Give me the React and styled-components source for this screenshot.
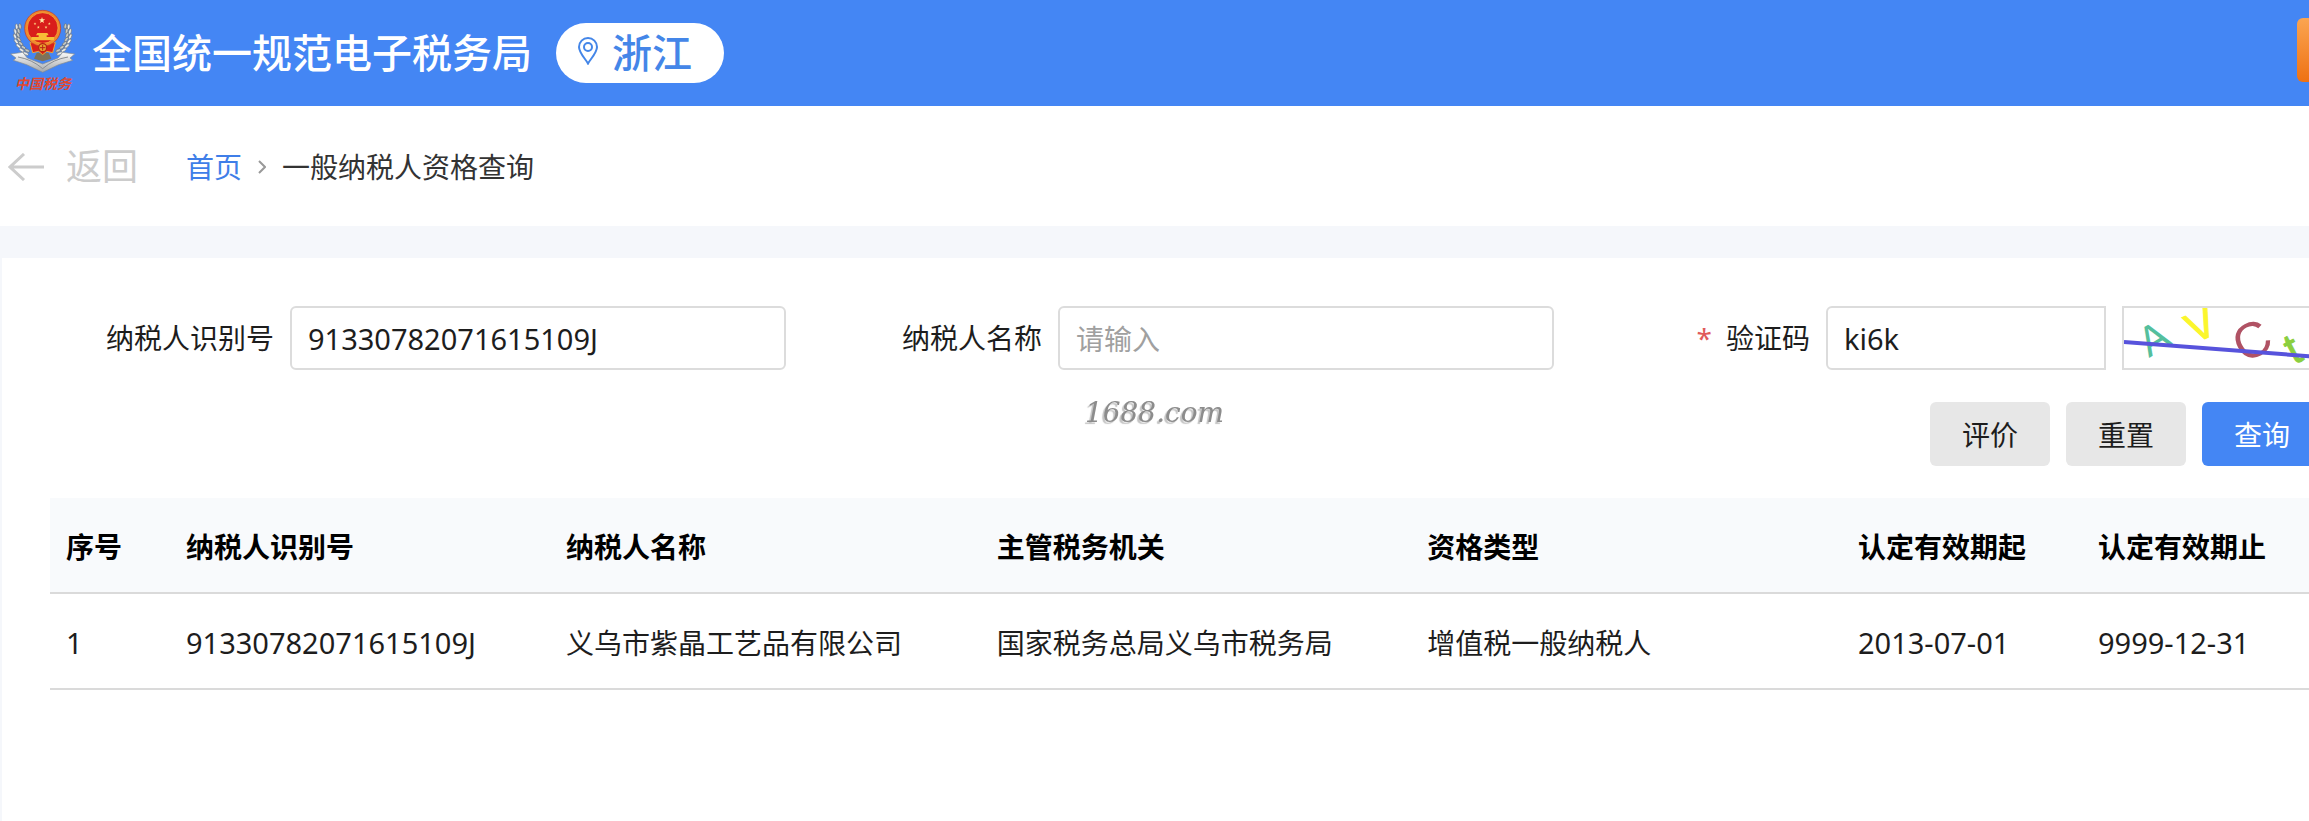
import React from "react";
import styled, { createGlobalStyle } from "styled-components";

const GlobalStyle = createGlobalStyle`
  *, *::before, *::after { box-sizing: border-box; }
  body {
    margin: 0;
    overflow-x: hidden;
    background: #f5f7fb;
    color: #1d1d1d;
    font-family: "Noto Sans", "Noto Sans CJK SC", sans-serif;
    font-size: 28px;
    line-height: 40px;
  }
  button, input { font: inherit; color: inherit; }
`;

const Viewport = styled.div`
  overflow: hidden;
`;

const Page = styled.div`
  display: flex;
  flex-direction: column;
  min-width: 2370px;
  min-height: 100vh;
`;

const Header = styled.header`
  display: flex;
  align-items: center;
  height: 106px;
  padding: 0 0 0 10px;
  background: #4486f4;
`;

const Brand = styled.div`
  display: flex;
  flex-direction: column;
  align-items: center;
  width: 66px;
  margin: 0 16px 6px 0;
`;

const BrandName = styled.span`
  color: #e2482f;
  font-family: "Noto Sans CJK SC", sans-serif;
  font-size: 14px;
  font-style: italic;
  font-weight: 700;
  line-height: 20px;
`;

const Title = styled.h1`
  margin: 0 24px 4px 0;
  color: #fff;
  font-family: "Noto Sans CJK SC", sans-serif;
  font-size: 40px;
  font-weight: 500;
  line-height: 60px;
`;

const Region = styled.button`
  display: flex;
  align-items: center;
  gap: 14px;
  height: 60px;
  padding: 0 32px 4px 22px;
  border: 0;
  border-radius: 30px;
  background: #fff;
  color: #4486e8;
  font-family: "Noto Sans CJK SC", sans-serif;
  font-size: 40px;
  font-weight: 500;
  line-height: 56px;
`;

const HeaderAction = styled.button`
  width: 73px;
  height: 64px;
  margin: 0 0 6px auto;
  border: 0;
  border-radius: 6px;
  background: linear-gradient(#fba551, #ee7113);
`;

const Crumbs = styled.nav`
  display: flex;
  align-items: center;
  height: 120px;
  padding: 2px 0 0 8px;
  background: #fff;
`;

const Back = styled.button`
  display: flex;
  align-items: center;
  gap: 22px;
  margin-right: 48px;
  padding: 0;
  border: 0;
  background: none;
  color: #ccc;
  font-size: 36px;
`;

const HomeLink = styled.a`
  color: #3f7ee8;
  text-decoration: none;
`;

const Separator = styled.svg`
  margin: 0 16px;
`;

const Current = styled.span`
  color: #333;
`;

const Panel = styled.main`
  display: flex;
  flex: 1;
  flex-direction: column;
  gap: 32px;
  margin: 32px 0 0 2px;
  padding: 48px;
  background: #fff;
`;

const Form = styled.form`
  display: grid;
  grid-template-columns: repeat(3, minmax(0, 1fr));
  gap: 32px;
`;

const Field = styled.div`
  display: flex;
  align-items: center;
  gap: 16px;
`;

const Label = styled.label`
  width: 224px;
  flex: none;
  text-align: right;
`;

const Required = styled.span`
  margin-right: 14px;
  color: #e05a5a;
`;

const Input = styled.input`
  flex: 1;
  min-width: 0;
  height: 64px;
  padding: 0 16px;
  border: 2px solid #dcdcdc;
  border-radius: ${(p) => (p.$joined ? "6px 0 0 6px" : "6px")};
  background: #fff;
  font-size: 29px;
  outline: 0;
  &::placeholder { color: #a0a0a0; font-size: 28px; opacity: 1; }
`;

const Captcha = styled.button`
  flex: none;
  width: 200px;
  height: 64px;
  padding: 0;
  border: 2px solid #dcdcdc;
  background: #fff;
  overflow: hidden;
  svg { display: block; }
`;

const Actions = styled.div`
  display: flex;
  grid-column: 1 / -1;
  justify-content: flex-end;
  gap: 16px;
`;

const Button = styled.button`
  width: 120px;
  height: 64px;
  padding: 2px 0 0;
  border: 0;
  border-radius: 6px;
  background: ${(p) => (p.$primary ? "#4486f4" : "#e7e7e7")};
  color: ${(p) => (p.$primary ? "#fff" : "#1d1d1d")};
`;

const Table = styled.table`
  width: 100%;
  table-layout: fixed;
  border-collapse: separate;
  border-spacing: 0;
`;

const Col = styled.col`
  width: ${(p) => p.$width};
`;

const Th = styled.th`
  height: 96px;
  padding: 4px 16px 0;
  border-bottom: 2px solid #dadada;
  background: #f8fafc;
  color: #000;
  font-weight: 700;
  text-align: left;
`;

const Td = styled.td`
  height: 96px;
  padding: 4px 16px 0;
  border-bottom: 2px solid #dadada;
  font-size: ${(p) => (p.$numeric ? "29px" : "28px")};
`;

const Watermark = styled.div`
  position: fixed;
  inset: 0;
  display: grid;
  place-items: center;
  padding-top: 4px;
  color: #8c8c8c;
  font-family: "DejaVu Serif", serif;
  font-size: 28px;
  font-style: italic;
  text-shadow: -2px 2px 1px #c4c4c4;
  pointer-events: none;
`;

const leftLeaves = [
  [24, 56, -8], [20, 70, -14], [19, 84, -26], [22, 98, -38], [28, 111, -48], [37, 123, -56], [49, 133, -66],
];

function Leaves() {
  return leftLeaves.map(([x, y, r]) => (
    <g key={y} transform={`rotate(${r} ${x} ${y})`}>
      <ellipse cx={x - 4} cy={y} rx="4" ry="9" fill="#e9ebe8" stroke="#6f7885" strokeWidth="2" />
      <ellipse cx={x + 6} cy={y} rx="4" ry="8" fill="#c5c9c6" stroke="#6b6f70" strokeWidth="2" />
    </g>
  ));
}

const starPoints = "0,-10 2.4,-3.2 9.5,-3.1 3.8,1.2 5.9,8.1 0,4 -5.9,8.1 -3.8,1.2 -9.5,-3.1 -2.4,-3.2";

function Emblem() {
  return (
    <svg width="66" height="65" viewBox="0 0 198 195" aria-hidden="true">
      <defs>
        <linearGradient id="ribbon" x1="0" y1="0" x2="0" y2="1">
          <stop offset="0" stopColor="#fafafa" />
          <stop offset="1" stopColor="#a4a7aa" />
        </linearGradient>
      </defs>
      <Leaves />
      <g transform="translate(196 0) scale(-1 1)"><Leaves /></g>
      <path d="M2 138 L38 133 L52 150 L98 168 L144 150 L158 133 L194 138 L180 150 L188 157 L146 170 L98 193 L50 170 L10 157 L18 150 Z" fill="url(#ribbon)" stroke="#84898e" strokeWidth="2" />
      <path d="M24 147 Q66 154 98 182 Q130 154 174 147" fill="none" stroke="#898d91" strokeWidth="3" />
      <path d="M98 160 L72 152 L80 134 L116 134 L124 152 Z" fill="#7d725b" />
      <path d="M60 104 L136 104 L128 134 L110 130 L98 140 L86 130 L68 134 Z" fill="#d9201b" stroke="#f1a831" strokeWidth="3" />
      <circle cx="98" cy="61" r="54" fill="#ef8a2d" stroke="#c5351f" strokeWidth="2" />
      <circle cx="98" cy="60" r="46" fill="#d91e1b" stroke="#f7bb3e" strokeWidth="2" />
      <polygon points={starPoints} transform="translate(96 37)" fill="#ffe9a6" />
      {[[75, 47], [85, 58], [108, 58], [118, 47]].map(([x, y]) => (
        <polygon key={x} points={starPoints} transform={`translate(${x} ${y}) scale(.45)`} fill="#ffdc83" />
      ))}
      <path d="M82 75 H112 L116 82 H110 V87 H132 V97 H64 V87 H86 V82 H78 Z" fill="#f8be36" />
      <circle cx="98" cy="119" r="12" fill="#e5a22c" stroke="#b92316" strokeWidth="4" />
      <path d="M90 119 H106 M98 111 V127" stroke="#b92316" strokeWidth="3" />
    </svg>
  );
}

function Pin() {
  return (
    <svg width="20" height="28" viewBox="0 0 20 28" fill="none" stroke="#4486e8" strokeWidth="2" aria-hidden="true">
      <path d="M10 26.5 C8 22.5 1 16 1 10 A9 9 0 0 1 19 10 C19 16 12 22.5 10 26.5 Z" />
      <circle cx="10" cy="10" r="4" />
    </svg>
  );
}

function CaptchaImage() {
  return (
    <svg width="196" height="60" viewBox="0 0 196 60" fontFamily="Liberation Sans, sans-serif" role="img" aria-label="验证码图片">
      <text transform="translate(25 50) rotate(-31)" fontSize="42" fill="#55bf9d">A</text>
      <text transform="translate(70 36) rotate(-25)" fontSize="42" fill="#fbf62c" stroke="#fbf62c">V</text>
      <text transform="translate(120 56) rotate(-28)" fontSize="50" fill="#b05264">C</text>
      <text transform="translate(170 57) rotate(-28)" fontSize="44" fill="#8bcf3f" stroke="#8bcf3f">t</text>
      <line x1="0" y1="34" x2="196" y2="49" stroke="#5753dc" strokeWidth="4" />
    </svg>
  );
}

const columns = [
  { title: "序号", width: "120px", numeric: true },
  { title: "纳税人识别号", width: "380px", numeric: true },
  { title: "纳税人名称", width: "auto" },
  { title: "主管税务机关", width: "auto" },
  { title: "资格类型", width: "auto" },
  { title: "认定有效期起", width: "240px", numeric: true },
  { title: "认定有效期止", width: "240px", numeric: true },
];

const rows = [
  ["1", "91330782071615109J", "义乌市紫晶工艺品有限公司", "国家税务总局义乌市税务局", "增值税一般纳税人", "2013-07-01", "9999-12-31"],
];

export default function App() {
  return (
    <Viewport>
      <GlobalStyle />
      <Page>
        <Header>
          <Brand>
            <Emblem />
            <BrandName>中国税务</BrandName>
          </Brand>
          <Title>全国统一规范电子税务局</Title>
          <Region type="button"><Pin />浙江</Region>
          <HeaderAction type="button" aria-label="更多" />
        </Header>
        <Crumbs>
          <Back type="button">
            <svg width="36" height="28" viewBox="0 0 36 28" fill="none" stroke="#ccc" strokeWidth="3" aria-hidden="true">
              <path d="M16 1 L2 14 L16 27 M2 14 H36" />
            </svg>
            返回
          </Back>
          <HomeLink href="#">首页</HomeLink>
          <Separator width="8" height="14" viewBox="0 0 8 14" fill="none" stroke="#999" strokeWidth="2" aria-hidden="true">
            <path d="M1 1 L7 7 L1 13" />
          </Separator>
          <Current>一般纳税人资格查询</Current>
        </Crumbs>
        <Panel>
          <Form onSubmit={(e) => e.preventDefault()}>
            <Field>
              <Label htmlFor="taxpayer-id">纳税人识别号</Label>
              <Input id="taxpayer-id" defaultValue="91330782071615109J" />
            </Field>
            <Field>
              <Label htmlFor="taxpayer-name">纳税人名称</Label>
              <Input id="taxpayer-name" placeholder="请输入" />
            </Field>
            <Field>
              <Label htmlFor="code"><Required>*</Required>验证码</Label>
              <Input id="code" defaultValue="ki6k" $joined />
              <Captcha type="button"><CaptchaImage /></Captcha>
            </Field>
            <Actions>
              <Button type="button">评价</Button>
              <Button type="reset">重置</Button>
              <Button type="submit" $primary>查询</Button>
            </Actions>
          </Form>
          <Table>
            <colgroup>
              {columns.map((c) => <Col key={c.title} $width={c.width} />)}
            </colgroup>
            <thead>
              <tr>{columns.map((c) => <Th key={c.title} scope="col">{c.title}</Th>)}</tr>
            </thead>
            <tbody>
              {rows.map((row) => (
                <tr key={row[0]}>
                  {row.map((cell, i) => <Td key={columns[i].title} $numeric={columns[i].numeric}>{cell}</Td>)}
                </tr>
              ))}
            </tbody>
          </Table>
        </Panel>
      </Page>
      <Watermark>1688.com</Watermark>
    </Viewport>
  );
}
